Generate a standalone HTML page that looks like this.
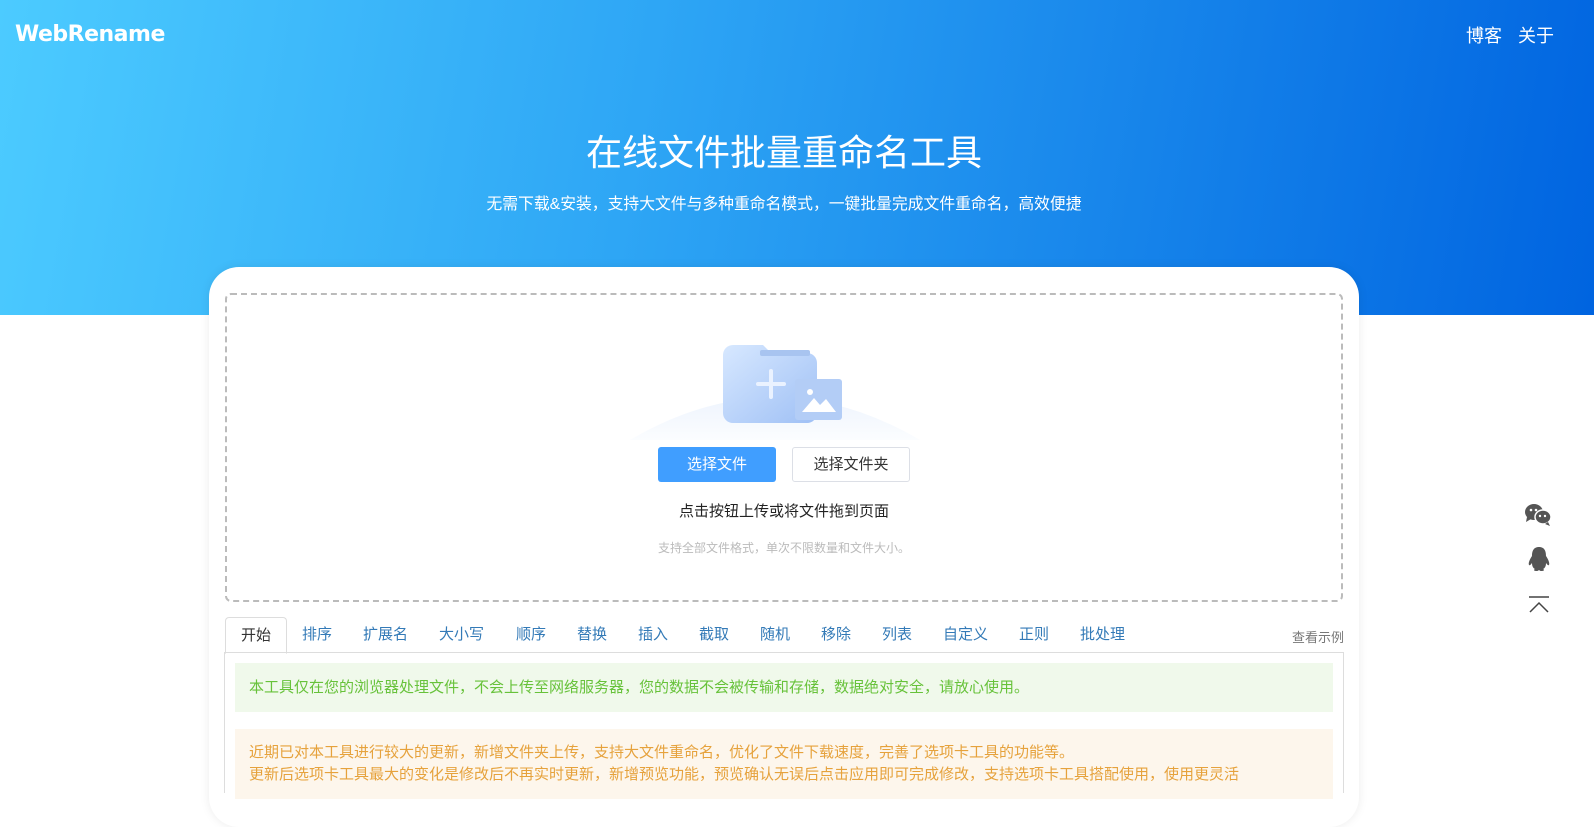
<!DOCTYPE html>
<html><head><meta charset="utf-8">
<style>
*{margin:0;padding:0;box-sizing:border-box}
body{width:1594px;height:789px;overflow:hidden;background:#fff;font-family:"Liberation Sans","Noto Sans CJK SC",sans-serif;position:relative}
.hero{position:absolute;left:0;top:0;width:1594px;height:315px;background:linear-gradient(100deg,#4ccbff 0%,#2ea6f5 40%,#0064e0 100%)}
.logo{position:absolute;left:15px;top:22px;color:#fff;font-weight:bold;font-size:22px;font-family:"DejaVu Sans","Liberation Sans",sans-serif;letter-spacing:-0.5px}
.nav{position:absolute;right:40px;top:22px;color:#fff;font-size:18px}
.nav span{margin-left:16px}
.h1{position:absolute;left:0;width:1568px;text-align:center;top:124px;color:#fff;font-size:36px}
.sub{position:absolute;left:0;width:1568px;text-align:center;top:191px;color:#fff;font-size:15.8px}
.card{position:absolute;left:209px;top:267px;width:1150px;height:560px;background:#fff;border-radius:30px;box-shadow:0 0 10px rgba(0,0,0,.08)}
.drop{position:absolute;left:225px;top:293px;width:1118px;height:309px;border:2px dashed #bbb;border-radius:6px}
.b1{position:absolute;left:658px;top:447px;width:118px;height:35px;background:#409eff;color:#fff;border-radius:3px;font-size:15px;text-align:center;line-height:35px}
.b2{position:absolute;left:792px;top:447px;width:118px;height:35px;border:1px solid #dcdfe6;color:#333;border-radius:3px;font-size:15px;text-align:center;line-height:33px}
.t1{position:absolute;left:0;width:1568px;text-align:center;top:500px;font-size:15px;color:#222}
.t2{position:absolute;left:0;width:1568px;text-align:center;top:539px;font-size:12px;color:#bbb}
.tabs{position:absolute;left:224px;top:617px;width:1120px;height:36px;border-bottom:1px solid #ddd}
.tab{position:absolute;top:0;height:36px;line-height:36px;font-size:15px;color:#337ab7}
.tab.act{border:1px solid #ddd;border-bottom:1px solid #fff;border-radius:4px 4px 0 0;color:#333;padding:0 15px;left:1px;height:37px}
.ex{position:absolute;right:0;top:10px;font-size:13px;color:#777}
.panel{position:absolute;left:224px;top:653px;width:1120px;height:140px;border-left:1px solid #ddd;border-right:1px solid #ddd}
.g{position:absolute;left:235px;top:663px;width:1098px;height:49px;background:#f0f9eb;color:#67c23a;font-size:15px;line-height:49px;padding-left:14px}
.o{position:absolute;left:235px;top:729px;width:1098px;height:70px;background:#fdf6ec;color:#e6a23c;font-size:15px;line-height:22px;padding:13px 14px;white-space:nowrap;overflow:hidden}
</style></head><body>
<div class="hero"></div>
<div class="logo">WebRename</div>
<div class="nav"><span>博客</span><span>关于</span></div>
<div class="h1">在线文件批量重命名工具</div>
<div class="sub">无需下载&amp;安装，支持大文件与多种重命名模式，一键批量完成文件重命名，高效便捷</div>
<div class="card"></div>
<div class="drop"></div>
<svg style="position:absolute;left:620px;top:340px" width="310" height="100">
<defs><linearGradient id="f" x1="0" y1="0" x2="1" y2="1"><stop offset="0" stop-color="#d7e8ff"/><stop offset="1" stop-color="#9fc0f5"/></linearGradient>
<linearGradient id="bg" x1="0" y1="0" x2="0" y2="1"><stop offset="0" stop-color="#eef4fd"/><stop offset="1" stop-color="#fbfdff"/></linearGradient></defs>
<path d="M10 100 Q155 15 300 100 Z" fill="url(#bg)"/>
<path d="M113 5 h30 l8 8 h36 a10 10 0 0 1 10 10 v50 a10 10 0 0 1 -10 10 h-74 a10 10 0 0 1 -10 -10 v-58 a10 10 0 0 1 10 -10z" fill="url(#f)"/>
<rect x="140" y="10" width="50" height="6" rx="2" fill="#a8c4f0"/>
<path d="M151 31 v26 M138 44 h26" stroke="#eaf2ff" stroke-width="4" stroke-linecap="round"/>
<rect x="175" y="39" width="47" height="41" rx="3" fill="#b3cdf6"/>
<circle cx="190" cy="52" r="3" fill="#fff"/>
<path d="M182 72 l12-14 6 7 6-6 10 13z" fill="#fff"/>
</svg>
<div class="b1">选择文件</div>
<div class="b2">选择文件夹</div>
<div class="t1">点击按钮上传或将文件拖到页面</div>
<div class="t2">支持全部文件格式，单次不限数量和文件大小。</div>
<div class="tabs">
<div class="tab act">开始</div>
<div class="tab" style="left:78px">排序</div>
<div class="tab" style="left:139px">扩展名</div>
<div class="tab" style="left:215px">大小写</div>
<div class="tab" style="left:292px">顺序</div>
<div class="tab" style="left:353px">替换</div>
<div class="tab" style="left:414px">插入</div>
<div class="tab" style="left:475px">截取</div>
<div class="tab" style="left:536px">随机</div>
<div class="tab" style="left:597px">移除</div>
<div class="tab" style="left:658px">列表</div>
<div class="tab" style="left:719px">自定义</div>
<div class="tab" style="left:795px">正则</div>
<div class="tab" style="left:856px">批处理</div>
<div class="ex">查看示例</div>
</div>
<div class="panel"></div>
<div class="g">本工具仅在您的浏览器处理文件，不会上传至网络服务器，您的数据不会被传输和存储，数据绝对安全，请放心使用。</div>
<div class="o">近期已对本工具进行较大的更新，新增文件夹上传，支持大文件重命名，优化了文件下载速度，完善了选项卡工具的功能等。<br>更新后选项卡工具最大的变化是修改后不再实时更新，新增预览功能，预览确认无误后点击应用即可完成修改，支持选项卡工具搭配使用，使用更灵活</div>
<svg style="position:absolute;left:1524px;top:503px" width="30" height="24">
<ellipse cx="10" cy="9" rx="9" ry="8" fill="#555"/><path d="M3 14 l-1 5 5-3z" fill="#555"/>
<ellipse cx="19" cy="14" rx="8" ry="7" fill="#555" stroke="#fff" stroke-width="1.5"/><path d="M24 19 l2 4 -5-2z" fill="#555"/>
<circle cx="7" cy="7" r="1.3" fill="#fff"/><circle cx="12" cy="7" r="1.3" fill="#fff"/><circle cx="16" cy="13" r="1.2" fill="#fff"/><circle cx="21" cy="13" r="1.2" fill="#fff"/>
</svg>
<svg style="position:absolute;left:1527px;top:546px" width="24" height="26">
<path d="M12 1 C6 1 5 6 5 10 C3 13 1 17 2 19 C3 20 4 18 5 17 C5 20 6 22 8 23 C6 24 7 25 10 25 C11 25 12 24 12 24 C12 24 13 25 14 25 C17 25 18 24 16 23 C18 22 19 20 19 17 C20 18 21 20 22 19 C23 17 21 13 19 10 C19 6 18 1 12 1Z" fill="#555"/>
</svg>
<svg style="position:absolute;left:1527px;top:596px" width="24" height="18">
<path d="M2 1 h20" stroke="#444" stroke-width="1.5"/><path d="M3 16 l9-9 9 9" stroke="#444" stroke-width="1.5" fill="none"/>
</svg>
</body></html>
